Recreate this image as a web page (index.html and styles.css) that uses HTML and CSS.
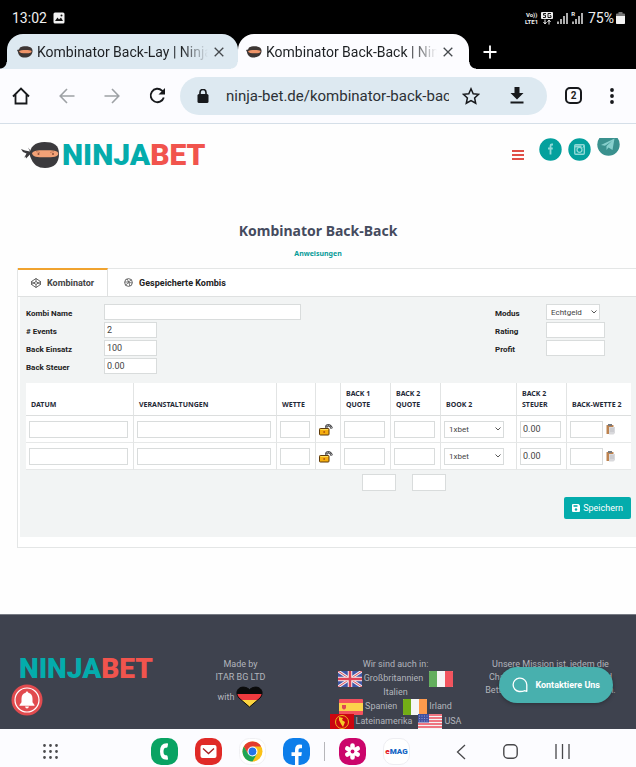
FILE: index.html
```html
<!DOCTYPE html>
<html lang="de">
<head>
<meta charset="utf-8">
<meta name="viewport" content="width=device-width, initial-scale=1">
<title>Kombinator Back-Back | Ninja-Bet</title>
<link rel="stylesheet" href="styles.css">
</head>
<body>
<svg class="defs" aria-hidden="true">
  <symbol id="ninja" viewBox="0 0 39 26">
    <path d="M0 7l4 1.500 5 1-2-4 4 5-2 2-4 4-.5-2L3 16l2.500-4.500L2 10z" fill="#3b3a3d"/>
    <path d="M23.500 0C33 0 38 3 38 12c0 9-5 14-14 14-7 0-12-3-15-12C8 5 14 0 23.500 0z" fill="#3b3a3d"/>
    <path d="M11 11.500c1-3 5-3.300 13-3.300s13.300.3 13.300 3.500c0 3-5 3.600-13.300 3.600S12 14.800 11 11.500z" fill="#f3a277"/>
    <path d="M15 9.500l4 1M33 9.500l-4 1" stroke="#b96d4e" stroke-width=".7"/>
    <circle cx="17.500" cy="12" r="1" fill="#8a4e3a"/><circle cx="32" cy="12" r="1" fill="#8a4e3a"/>
  </symbol>
  <symbol id="favicon" viewBox="0 0 16 12">
    <path d="M3 1.500C6-.4 12-.4 14.500 2c2 2.500 1 6-1.500 8-3 2-8 2-10 0C1.500 8.500 1 7 1 6L0 4l2-.5z" fill="#3d3634"/>
    <path d="M2 5.300c1-1.500 11-1.700 12.500-.3.500 1.500-1.500 2.300-5.500 2.300S2.500 7 2 5.300z" fill="#ef9468"/>
  </symbol>
  <symbol id="close" viewBox="0 0 10 10"><path d="M.7.7l8.600 8.600M9.300.7L.7 9.300" stroke="#45494d" stroke-width="1.300"/></symbol>
  <symbol id="chevron" viewBox="0 0 6 4"><path d="M.5.5L3 3 5.500.5" fill="none" stroke="#444" stroke-width=".9"/></symbol>
  <symbol id="unlock" viewBox="0 0 14 13">
    <path d="M7.500 5.500C6 1.500 11 .8 12.800 5.500" fill="none" stroke="#4a4a4c" stroke-width="2.400"/>
    <path d="M7.500 5.500C6 1.500 11 .8 12.800 5.500" fill="none" stroke="#c4c4c6" stroke-width="1" stroke-dasharray="1.500 1"/>
    <rect x=".5" y="5.500" width="9.500" height="6.500" rx=".8" fill="#f5ae10" stroke="#5d3909"/>
    <path d="M1.500 6.500h7.500" stroke="#ffe05b"/><circle cx="5.200" cy="9" r="1" fill="#b85a0c"/>
  </symbol>
  <symbol id="paste" viewBox="0 0 9 11">
    <rect x=".5" y="1" width="7" height="9" rx=".5" fill="#bd8350"/>
    <rect x="2" y="0" width="4" height="2" fill="#77787b"/>
    <path d="M3 3h6v6l-1.500 1.500H3z" fill="#d9d9dc"/><path d="M4 5h4M4 7h4" stroke="#aeb0b5" stroke-width=".6"/>
  </symbol>
  <symbol id="signal" viewBox="0 0 11 12"><path d="M1 12v-2.500M4 12V7M7 12V4M10 12V1" stroke="#e8e8e8" stroke-width="1.500"/></symbol>
</svg>

<header class="browser">
  <div class="status">
    <span class="clock">13:02</span>
    <svg width="12" height="12" viewBox="0 0 12 12"><rect x=".5" y=".5" width="11" height="11" rx="1.500" fill="#f2f2f2"/><path d="M2 9l2.500-3.500L6 7.500 8 5.500 10 9z" fill="#111"/><circle cx="8.500" cy="3.500" r="1" fill="#111"/></svg>
    <span class="net"><span>Vo))</span><span>LTE1</span></span>
    <svg class="five" width="12" height="13" viewBox="0 0 12 13"><rect width="12" height="7" rx="1" fill="#eee"/><path d="M5 1.500H2.500v1.700h2v2.300H2M10 1.500H7v4h3V3.700H8.700" fill="none" stroke="#000" stroke-width=".9"/><path d="M4 7.500v4M2.500 10L4 12l1.500-2M8 12.500v-4M6.500 10L8 8l1.500 2" fill="none" stroke="#eee"/></svg>
    <svg class="sig" width="11" height="12"><use href="#signal"/></svg>
    <span class="roam">R</span>
    <svg class="sig" width="11" height="12"><use href="#signal"/></svg>
    <span class="charge">75%</span>
    <svg width="9" height="12" viewBox="0 0 9 12"><path d="M2.500 0h4v1.500H8q1 0 1 1V11q0 1-1 1H1q-1 0-1-1V2.500q0-1 1-1h1.500z" fill="#777"/><path d="M0 4h9v7q0 1-1 1H1q-1 0-1-1z" fill="#f3f3f3"/></svg>
  </div>
  <nav class="tabs" aria-label="Tabs">
    <div class="tab tab-idle">
      <svg width="16" height="12"><use href="#favicon"/></svg>
      <a href="#lay">Kombinator Back-Lay | Ninja-Bet</a>
      <button type="button" aria-label="Tab schließen"><svg width="10" height="10"><use href="#close"/></svg></button>
    </div>
    <div class="tab tab-active">
      <svg width="16" height="12"><use href="#favicon"/></svg>
      <a href="#back">Kombinator Back-Back | Ninja-Bet</a>
      <button type="button" aria-label="Tab schließen"><svg width="10" height="10"><use href="#close"/></svg></button>
    </div>
    <button class="new-tab" type="button" aria-label="Neuer Tab"><svg width="14" height="14" viewBox="0 0 14 14"><path d="M7 .5v13M.5 7h13" stroke="#fff" stroke-width="1.800"/></svg></button>
  </nav>
  <div class="toolbar">
    <div class="nav-buttons">
      <button type="button" aria-label="Startseite"><svg width="18" height="18" viewBox="0 0 18 18"><path d="M1 9.500L9 1.500l8 8M3.500 7.500v9h11v-9" fill="none" stroke="#17191c" stroke-width="1.800"/></svg></button>
      <button type="button" aria-label="Zurück"><svg width="16" height="16" viewBox="0 0 16 16"><path d="M15.500 8H1.500M8 1L1.200 8 8 15" fill="none" stroke="#9da1a5" stroke-width="1.600"/></svg></button>
      <button type="button" aria-label="Vorwärts"><svg width="16" height="16" viewBox="0 0 16 16"><path d="M.5 8h14M8 1l6.800 7L8 15" fill="none" stroke="#9da1a5" stroke-width="1.600"/></svg></button>
      <button type="button" aria-label="Neu laden"><svg width="17" height="17" viewBox="0 0 17 17"><path d="M14.800 10.500A6.700 6.700 0 1 1 13 3.600L15 5.500" fill="none" stroke="#17191c" stroke-width="1.900"/><path d="M16 1v6.500H9.500z" fill="#17191c"/></svg></button>
    </div>
    <div class="omnibox">
      <svg width="12" height="14" viewBox="0 0 12 14"><path d="M3 6V3.500a3 3 0 0 1 6 0V6" fill="none" stroke="#17191c" stroke-width="1.600"/><rect x=".5" y="5" width="11" height="9" rx="1.500" fill="#17191c"/></svg>
      <input type="text" aria-label="Adresse" value="ninja-bet.de/kombinator-back-back">
      <button type="button" aria-label="Lesezeichen"><svg width="18" height="18" viewBox="0 0 18 18"><path d="M9 1.800l2.200 4.900 5.400.6-4 3.600 1.100 5.300L9 13.500l-4.700 2.700 1.100-5.300-4-3.600 5.400-.6z" fill="none" stroke="#17191c" stroke-width="1.500"/></svg></button>
      <button class="download" type="button" aria-label="Herunterladen"><svg width="14" height="17" viewBox="0 0 14 17"><path d="M4.500 0h5v6H13.500L7 12.500.5 6h4zM.5 14.500h13v2H.5z" fill="#17191c"/></svg></button>
    </div>
    <button class="count" type="button" aria-label="Offene Tabs">2</button>
    <button class="more" type="button" aria-label="Menü"><svg width="4" height="16" viewBox="0 0 4 16"><path d="M2 2h0M2 8h0M2 14h0" stroke="#17191c" stroke-width="3.800" stroke-linecap="round"/></svg></button>
  </div>
</header>

<main class="page">
  <header class="site-header">
    <a class="logo" href="#home"><svg width="39" height="26"><use href="#ninja"/></svg><span>NINJA<b>BET</b></span></a>
    <button class="burger" type="button" aria-label="Navigation"><svg width="12" height="10" viewBox="0 0 12 10"><path d="M0 1h12M0 5h12M0 9h12" stroke="#e04f47" stroke-width="1.800"/></svg></button>
    <nav class="social" aria-label="Soziale Medien">
      <a href="#facebook" aria-label="Facebook"><svg width="23" height="23" viewBox="0 0 23 23"><circle cx="11.500" cy="11.500" r="11.200" fill="#04a09d"/><path d="M14 6.500h-1.200q-1.300 0-1.300 1.500v8.500M9 10.500h4.800" fill="none" stroke="#8ed8d6" stroke-width="1.800"/></svg></a>
      <a href="#instagram" aria-label="Instagram"><svg width="23" height="23" viewBox="0 0 23 23"><circle cx="11.500" cy="11.500" r="11.200" fill="#04a09d"/><rect x="6.700" y="6.700" width="9.600" height="9.600" rx="1" fill="none" stroke="#8ed8d6" stroke-width="1.400"/><path d="M7 8.500h9" stroke="#8ed8d6" stroke-width="2"/><circle cx="11.500" cy="11.800" r="2.500" fill="#04a09d" stroke="#8ed8d6" stroke-width="1.300"/><path d="M13.500 8.300h1.500" stroke="#04a09d" stroke-width="1.500"/></svg></a>
      <a class="telegram" href="#telegram" aria-label="Telegram"><svg width="23" height="23" viewBox="0 0 23 23"><circle cx="11.500" cy="11.500" r="11.200" fill="#3a918e"/><path d="M4 12L17.500 5.500 15.500 17l-4-2.500-2 2.500v-4L15 8l-7 4.800z" fill="#87cfcc"/></svg></a>
    </nav>
  </header>

  <h1>Kombinator Back-Back</h1>
  <a class="help" href="#anweisungen">Anweisungen</a>

  <section class="box">
    <div class="box-tabs">
      <button class="box-tab is-current" type="button"><svg width="10" height="10" viewBox="0 0 10 10"><path d="M5 .5l4.500 3v3L5 9.500.5 6.500v-3zM.5 3.500L5 6.500l4.500-3M.5 6.500L5 3.500l4.500 3M5 .5v3M5 6.500v3" fill="none" stroke="#444" stroke-width=".8"/></svg>Kombinator</button>
      <button class="box-tab" type="button"><svg width="9" height="9" viewBox="0 0 10 10"><circle cx="5" cy="5" r="4.300" fill="none" stroke="#444" stroke-width=".9"/><path d="M.8 4.500C4 4.800 7 4 8 2M3.200 1C5 3.500 6 6 6.500 9M2 8C3.500 5 6 4.700 9.200 5.500" fill="none" stroke="#444" stroke-width=".8"/></svg>Gespeicherte Kombis</button>
    </div>
    <form class="panel" onsubmit="return false">
      <div class="fields">
        <div class="field-group">
          <label for="name">Kombi Name</label><input id="name" class="wide" type="text">
          <label for="events"># Events</label><input id="events" type="text" value="2">
          <label for="stake">Back Einsatz</label><input id="stake" type="text" value="100">
          <label for="tax">Back Steuer</label><input id="tax" type="text" value="0.00">
        </div>
        <div class="field-group results">
          <label for="mode">Modus</label><span class="select"><select id="mode"><option>Echtgeld</option></select><svg width="6" height="4"><use href="#chevron"/></svg></span>
          <label for="rating">Rating</label><input id="rating" type="text">
          <label for="profit">Profit</label><input id="profit" type="text">
        </div>
      </div>
      <table>
        <colgroup><col class="c-date"><col><col class="c-bet"><col class="c-lock"><col class="c-odds"><col class="c-odds"><col class="c-book"><col class="c-odds"><col class="c-stake"></colgroup>
        <thead>
          <tr><th>Datum</th><th>Veranstaltungen</th><th>Wette</th><th></th><th>Back 1 Quote</th><th>Back 2 Quote</th><th>Book 2</th><th>Back 2 Steuer</th><th>Back-Wette 2</th></tr>
        </thead>
        <tbody>
          <tr>
            <td><input type="text" aria-label="Datum 1"></td><td><input type="text" aria-label="Veranstaltung 1"></td><td><input type="text" aria-label="Wette 1"></td>
            <td class="lock"><svg width="14" height="13"><use href="#unlock"/></svg></td>
            <td><input type="text" aria-label="Back 1 Quote 1"></td><td><input type="text" aria-label="Back 2 Quote 1"></td>
            <td><span class="select book"><select aria-label="Book 2, 1"><option>1xbet</option></select><svg width="6" height="4"><use href="#chevron"/></svg></span></td>
            <td><input type="text" aria-label="Back 2 Steuer 1" value="0.00"></td>
            <td><span class="copy"><input type="text" aria-label="Back-Wette 2, 1"><svg width="9" height="11"><use href="#paste"/></svg></span></td>
          </tr>
          <tr>
            <td><input type="text" aria-label="Datum 2"></td><td><input type="text" aria-label="Veranstaltung 2"></td><td><input type="text" aria-label="Wette 2"></td>
            <td class="lock"><svg width="14" height="13"><use href="#unlock"/></svg></td>
            <td><input type="text" aria-label="Back 1 Quote 2"></td><td><input type="text" aria-label="Back 2 Quote 2"></td>
            <td><span class="select book"><select aria-label="Book 2, 2"><option>1xbet</option></select><svg width="6" height="4"><use href="#chevron"/></svg></span></td>
            <td><input type="text" aria-label="Back 2 Steuer 2" value="0.00"></td>
            <td><span class="copy"><input type="text" aria-label="Back-Wette 2, 2"><svg width="9" height="11"><use href="#paste"/></svg></span></td>
          </tr>
        </tbody>
      </table>
      <div class="totals"><input type="text" aria-label="Gesamtquote 1"><input type="text" aria-label="Gesamtquote 2"></div>
      <button class="save" type="submit"><svg width="8" height="8" viewBox="0 0 8 8"><path d="M1 0h5.500L8 1.500V7q0 1-1 1H1Q0 8 0 7V1q0-1 1-1z" fill="#fff"/><path d="M1.500 1.200h4v1.600h-4z" fill="#04acac"/><circle cx="4" cy="5.500" r="1.200" fill="#04acac"/></svg>Speichern</button>
    </form>
  </section>

  <footer class="site-footer">
    <div class="brand">NINJA<b>BET</b></div>
    <div class="made">
      <div>Made by</div><div>ITAR BG LTD</div>
      <div class="with">with <svg width="27" height="22" viewBox="0 0 27 22"><clipPath id="heart"><path d="M13.500 21L3 12C-3 5 5-3 13.500 3.500 22-3 30 5 24 12z"/></clipPath><g clip-path="url(#heart)"><path d="M0 0h27v8H0z" fill="#0b0b0b"/><path d="M0 8h27v6H0z" fill="#ee3a3e"/><path d="M0 14h27v8H0z" fill="#fcd440"/></g><path d="M13.500 21L3 12C-3 5 5-3 13.500 3.500 22-3 30 5 24 12z" fill="none" stroke="#0b0b0b"/></svg></div>
    </div>
    <div class="countries">
      <div class="line">Wir sind auch in:</div>
      <div class="flags"><svg width="24" height="16" viewBox="0 0 24 16"><rect width="24" height="16" rx="1" fill="#4055a6"/><path d="M0 0l24 16M24 0L0 16" stroke="#eee" stroke-width="3"/><path d="M0 0l24 16M24 0L0 16" stroke="#e2495c" stroke-width="1"/><path d="M12 0v16M0 8h24" stroke="#f2f2f2" stroke-width="4.500"/><path d="M12 0v16M0 8h24" stroke="#dd4256" stroke-width="2.500"/></svg><a href="#gb">Großbritannien</a><svg class="gap" width="24" height="16" viewBox="0 0 24 16"><rect width="24" height="16" rx="1" fill="#f4f4f4"/><path d="M1 0h7v16H1q-1 0-1-1V1q0-1 1-1z" fill="#63ae5d"/><path d="M16 0h7q1 0 1 1v14q0 1-1 1h-7z" fill="#f2545e"/></svg></div>
      <div class="line"><a href="#it">Italien</a></div>
      <div class="flags"><svg width="24" height="16" viewBox="0 0 24 16"><rect width="24" height="16" rx="1" fill="#f3515e"/><path d="M0 4h24v8H0z" fill="#fcd24c"/><path d="M3 6h4v3q-2 3-4 0z" fill="#df4654"/></svg><a href="#es">Spanien</a><svg class="gap" width="24" height="16" viewBox="0 0 24 16"><rect width="24" height="16" rx="1" fill="#f5f5f5"/><path d="M1 0h7v16H1q-1 0-1-1V1q0-1 1-1z" fill="#73ad16"/><path d="M16 0h7q1 0 1 1v14q0 1-1 1h-7z" fill="#ff9a4c"/></svg><a href="#ie">Irland</a></div>
      <div class="flags"><svg width="24" height="16" viewBox="0 0 24 16"><rect width="24" height="16" fill="#cb0610"/><circle cx="12" cy="8" r="6.500" fill="none" stroke="#f0b51d"/><path d="M9 3l4 1-1 2 3 2-2 5-2-3-2-4z" fill="#f6cb27"/></svg><a href="#latam">Lateinamerika</a><svg class="gap" width="24" height="16" viewBox="0 0 24 16"><rect width="24" height="16" fill="#f4f4f4"/><path d="M0 1h24M0 4h24M0 7h24M0 10h24M0 13h24" stroke="#ec4c5b" stroke-width="1.500"/><path d="M0 0h11v8.500H0z" fill="#4050a0"/><path d="M1 2h10M1 4.500h10M1 7h10" stroke="#aab3dd" stroke-dasharray="1 1.500" stroke-width=".8"/></svg><a href="#us">USA</a></div>
    </div>
    <p class="mission">Unsere Mission ist, jedem die<br>Chance zu geben, mit Matched<br>Betting sicher Geld zu verdienen.</p>
  </footer>

  <button class="bell" type="button" aria-label="Benachrichtigungen"><svg width="32" height="32" viewBox="0 0 32 32"><circle cx="16" cy="16" r="15.500" fill="#e14b4f"/><circle cx="16" cy="16" r="12" fill="none" stroke="#fff" stroke-width="1.200"/><path d="M16 7.500q1.300 0 1.300 1.200 4.200 1 4.200 6v3.500l2 2.800v.8h-15V21l2-2.800v-3.500q0-5 4.200-6 0-1.200 1.300-1.200zM14 22.600h4q-.5 2-2 2t-2-2z" fill="#fff"/></svg></button>
  <button class="chat" type="button"><svg width="17" height="16" viewBox="0 0 17 16"><path d="M8 1.200h1a6.700 6.700 0 0 1 6.800 6.600v6.500l-2.300-.6Q12 14.500 9 14.500H8A6.700 6.700 0 0 1 8 1.200z" fill="none" stroke="#fff" stroke-width="1.300" stroke-linejoin="round"/></svg>Kontaktiere Uns</button>
</main>

<nav class="dock" aria-label="Systemleiste">
  <button class="drawer" type="button" aria-label="Alle Apps"><svg width="17" height="17" viewBox="0 0 17 17"><path d="M2.500 2.500h0M8.500 2.500h0M14.500 2.500h0M2.500 8.500h0M8.500 8.500h0M14.500 8.500h0M2.500 14.500h0M8.500 14.500h0M14.500 14.500h0" stroke="#4a4a4d" stroke-width="2.800" stroke-linecap="round"/></svg></button>
  <div class="apps">
    <button type="button" aria-label="Telefon"><svg width="27" height="27" viewBox="0 0 27 27"><rect width="27" height="27" rx="10" fill="#09a363"/><path d="M16.500 5.300q-7.500-.5-7.500 8.200t7.500 8.200q.8-.2.500-1.200l-.5-2.500q-.3-.8-1.300-.7-2.700.3-2.700-3.800t2.700-3.800q1 .1 1.300-.7l.5-2.500q.3-1-.5-1.200z" fill="#fff"/></svg></button>
    <button type="button" aria-label="E-Mail"><svg width="27" height="27" viewBox="0 0 27 27"><rect width="27" height="27" rx="10" fill="#e02a27"/><rect x="5.500" y="7" width="16" height="13" rx="2" fill="#fff"/><path d="M8 10.500l5.500 5 5.500-5" fill="none" stroke="#a51e20" stroke-width="1.300"/></svg></button>
    <button type="button" aria-label="Chrome"><svg width="27" height="27" viewBox="0 0 27 27"><rect x=".5" y=".5" width="26" height="26" rx="10" fill="#fff" stroke="#f0f0f3"/><circle cx="13.500" cy="13.500" r="10" fill="#fbc117"/><path d="M4.840 8.500A10 10 0 0 1 22.160 8.500H13.500L9.200 16z" fill="#e33b2e"/><path d="M4.840 8.500A10 10 0 0 0 13.500 23.500L17.800 16 9.200 16z" fill="#1da453"/><circle cx="13.500" cy="13.500" r="5" fill="#fff"/><circle cx="13.500" cy="13.500" r="3.900" fill="#2474e8"/></svg></button>
    <button type="button" aria-label="Facebook"><svg width="27" height="27" viewBox="0 0 27 27"><rect width="27" height="27" rx="10" fill="#0d7eea"/><path d="M12 27v-9H8.500v-3.700H12v-2.600Q12 6.500 16.800 6.500l2.200.2v3.500h-1.700q-1.800 0-1.800 1.800v2.300h3.400L18.300 18h-2.800v9z" fill="#fff"/></svg></button>
    <span class="divider"></span>
    <button type="button" aria-label="Galerie"><svg width="27" height="27" viewBox="0 0 27 27"><rect width="27" height="27" rx="10" fill="#cb056b"/><path d="M13.500 9V7.500M13.500 18v1.500M9.600 11.200l-1.300-.7M17.400 15.800l1.300.7M9.600 15.800l-1.300.7M17.400 11.200l1.300-.7" stroke="#fff" stroke-width="4.600" stroke-linecap="round"/><circle cx="13.500" cy="13.500" r="4.500" fill="#fff"/><circle cx="13.500" cy="13.500" r="1.900" fill="#cb056b"/></svg></button>
    <button class="emag" type="button"><i>e</i>MAG</button>
  </div>
  <div class="system">
    <button type="button" aria-label="Zurück"><svg width="10" height="16" viewBox="0 0 10 16"><path d="M9 1L1.500 8 9 15" fill="none" stroke="#48484b" stroke-width="1.300"/></svg></button>
    <button type="button" aria-label="Home"><svg width="15" height="15" viewBox="0 0 15 15"><rect x=".8" y=".8" width="13.400" height="13.400" rx="4" fill="none" stroke="#48484b" stroke-width="1.400"/></svg></button>
    <button type="button" aria-label="Letzte Apps"><svg width="15" height="15" viewBox="0 0 15 15"><path d="M1 0v15M7.500 0v15M14 0v15" stroke="#48484b" stroke-width="1.300"/></svg></button>
  </div>
</nav>
</body>
</html>
```
FILE: styles.css
```css
* { box-sizing: border-box; }

body {
  margin: 0;
  height: 100vh;
  display: flex;
  flex-direction: column;
  overflow: hidden;
  background: #fefefe;
  font-family: Roboto, "Liberation Sans", sans-serif;
  color: #222;
}

button {
  margin: 0;
  padding: 0;
  border: 0;
  background: none;
  font: inherit;
  color: inherit;
}

a { color: inherit; text-decoration: none; }
svg { display: block; flex: none; }
.defs { position: absolute; width: 0; height: 0; }

/* Browser chrome */
.browser { flex: none; background: #000; }

.status {
  display: flex;
  align-items: center;
  height: 34px;
  padding: 2px 11px 0 12px;
  color: #f0f0f0;
  font-size: 14px;
}
.clock { margin-right: 6px; }
.net {
  display: flex;
  flex-direction: column;
  margin-left: auto;
  font-size: 6px;
  font-weight: 700;
  line-height: 7px;
  text-align: center;
}
.five { margin: 0 4px 0 3px; }
.roam { align-self: flex-start; margin: 8px -3px 0 3px; font-size: 6px; font-weight: 700; line-height: 8px; }
.charge { margin: 0 2px 0 5px; }

.tabs { display: flex; height: 35px; padding-left: 7px; }
.tab {
  position: relative;
  display: flex;
  align-items: center;
  width: 231px;
  padding: 0 14px 0 10px;
  border-radius: 16px 16px 0 0;
  font-size: 14px;
  color: #1d2023;
}
.tab-idle { background: #dde9f1; }
.tab-active { background: #fcfcff; padding: 0 16px 0 8px; }
.tab-idle::before,
.tab-active::before,
.tab-active::after {
  content: "";
  position: absolute;
  bottom: 0;
  width: 7px;
  height: 7px;
}
.tab-idle::before { left: -7px; background: radial-gradient(circle at 0 0, transparent 6px, #dde9f1 7px); }
.tab-active::before { left: -7px; background: radial-gradient(circle at 0 0, transparent 6px, #fcfcff 7px); }
.tab-active::after { right: -7px; background: radial-gradient(circle at 100% 0, transparent 6px, #fcfcff 7px); }
.tab a {
  flex: 1;
  margin: 0 6px 0 4px;
  overflow: hidden;
  white-space: nowrap;
  -webkit-mask-image: linear-gradient(to right, #000 84%, transparent);
  mask-image: linear-gradient(to right, #000 84%, transparent);
}
.new-tab { margin-left: 14px; }

.toolbar {
  display: flex;
  align-items: center;
  height: 55px;
  padding: 0 22px 1px 12px;
  border-bottom: 1px solid #d5dfe8;
  background: #fcfcff;
}
.nav-buttons { display: flex; align-items: center; gap: 29px; margin-right: 14px; }
.omnibox {
  display: flex;
  align-items: center;
  flex: 1;
  min-width: 0;
  height: 38px;
  padding: 0 23px 0 17px;
  border-radius: 19px;
  background: #dde9f1;
}
.omnibox input {
  flex: 1;
  min-width: 0;
  margin: 0 13px 0 17px;
  padding: 0;
  border: 0;
  background: none;
  font: 15px Roboto, sans-serif;
  color: #2c3136;
  outline: 0;
}
.download { margin-left: 30px; }
.count {
  width: 17px;
  height: 17px;
  margin: 0 28px 0 18px;
  border: 2px solid #17191c;
  border-radius: 5px;
  font-size: 10px;
  font-weight: 700;
  line-height: 13px;
}

/* Page */
.page { position: relative; flex: 1; min-height: 0; overflow: hidden; }

.site-header { display: flex; align-items: flex-start; height: 97px; padding: 14px 16px 0 21px; }
.logo { display: flex; align-items: center; gap: 2px; margin: 4px auto 0 0; }
.logo span, .brand {
  font-family: Roboto, sans-serif;
  font-weight: 900;
  color: #04acac;
}
.logo span { font-size: 30px; line-height: 26px; }
.logo b, .brand b { font-weight: 900; color: #f1544d; }
.burger { margin: 12px 15px 0 0; }
.social { display: flex; gap: 6px; }
.telegram { display: flex; align-items: flex-end; height: 18px; overflow: hidden; }

h1 {
  margin: 0;
  font: 700 14px/20px "Noto Sans", "Open Sans", sans-serif;
  color: #454b5e;
  text-align: center;
}
.help {
  display: block;
  width: max-content;
  margin: 7px auto 8px;
  font: 700 7px/12px "Noto Sans", "Open Sans", sans-serif;
  color: #079b98;
}

.box { margin-left: 17px; border: 1px solid #e4e6e6; border-right: 0; padding-bottom: 10px; background: #fff; }
.box-tabs { display: flex; height: 28px; border-bottom: 1px solid #dfe1e1; }
.box-tab {
  display: flex;
  align-items: center;
  gap: 6px;
  padding: 0 16px;
  font-size: 9px;
  font-weight: 700;
}
.box-tab.is-current {
  padding: 0 13px;
  margin-top: -1px;
  border-top: 2px solid #f0a32f;
  border-right: 1px solid #dfe1e1;
  color: #444;
}

.panel { margin-left: 2px; padding: 7px 5px 18px 6px; background: #f2f4f4; }
.panel input, .panel select {
  width: 100%;
  height: 17px;
  margin: 0;
  padding: 0 2px;
  border: 1px solid #d9dcdc;
  border-radius: 0;
  background: #fff;
  font: 9px Roboto, sans-serif;
  color: #444;
  outline: 0;
}
.fields { display: flex; justify-content: space-between; margin-bottom: 7px; }
.field-group {
  display: grid;
  grid-template-columns: 78px 197px;
  grid-auto-rows: 18px;
  align-content: start;
  font-size: 8px;
  font-weight: 700;
  line-height: 19px;
}
.field-group input { width: 53px; height: 16px; }
.field-group .wide { width: 100%; }
.results { grid-template-columns: 51px 85px; }
.results input { width: 59px; }
.select { position: relative; display: block; width: 54px; height: 16px; }
.panel .select select { display: block; height: 100%; padding: 0 4px; appearance: none; font-size: 8px; }
.select svg { position: absolute; right: 3px; top: 6px; }
.select.book { width: 60px; height: 17px; }

table { width: 100%; border-collapse: separate; border-spacing: 0; table-layout: fixed; background: #fff; }
.c-date { width: 108px; }
.c-bet { width: 39px; }
.c-lock { width: 25px; }
.c-odds { width: 50px; }
.c-book { width: 76px; }
.c-stake { width: 64px; }
th {
  height: 33px;
  padding: 0 4px 5px 5px;
  border-right: 1px solid #e2e4e4;
  border-bottom: 1px solid #dcdede;
  vertical-align: bottom;
  text-align: left;
  text-transform: uppercase;
  font: 700 7px/11px "Noto Sans", "Open Sans", sans-serif;
  color: #1f2937;
}
th:last-child { padding-right: 0; white-space: nowrap; }
td { height: 27px; padding: 0 5px 0 3px; border-right: 1px solid #e2e4e4; border-bottom: 1px solid #e6e8e8; }
th:last-child, td:last-child { border-right: 0; }
td input { display: block; }
td.lock { padding: 0 0 0 3px; }
.copy { display: flex; align-items: center; gap: 3px; }
.panel .copy input { width: 33px; }

.totals { display: flex; justify-content: flex-end; gap: 16px; margin: 4px 185px 6px 0; }
.panel .totals input { width: 34px; }
.save {
  display: flex;
  align-items: center;
  gap: 3px;
  height: 22px;
  margin-left: auto;
  padding: 0 8px;
  border-radius: 2px;
  background: #04acac;
  color: #fff;
  font-size: 9px;
}

.site-footer {
  display: grid;
  grid-template-columns: repeat(4, 1fr);
  height: 190px;
  margin-top: 66px;
  padding: 43px 8px 0;
  border-top: 1px solid #777b84;
  background: #3e424e;
  color: #b2b5bc;
  font-size: 9px;
  line-height: 13px;
  text-align: center;
}
.brand { padding-left: 11px; font-size: 28px; line-height: 22px; text-align: left; }
.with { display: flex; align-items: center; justify-content: center; gap: 2px; height: 26px; }
.flags { display: flex; align-items: center; justify-content: center; gap: 2px; height: 15px; margin: 0 -10px; }
.flags .gap { margin-left: 4px; }
.mission { margin: 0; white-space: nowrap; }

.bell { position: absolute; left: 11px; bottom: 13px; }
.chat {
  position: absolute;
  right: 23px;
  bottom: 26px;
  display: flex;
  align-items: center;
  gap: 7px;
  height: 36px;
  padding: 0 13px 0 12px;
  border-radius: 18px;
  background: #48b0ae;
  box-shadow: 0 1px 4px rgba(0, 0, 0, 0.3);
  color: #fff;
  font-size: 9px;
  font-weight: 700;
}

/* System navigation */
.dock {
  display: flex;
  align-items: center;
  flex: none;
  height: 38px;
  padding: 7px 66px 0 42px;
  background: #fcfcff;
}
.apps { display: flex; align-items: center; gap: 17px; margin: 0 auto 0 92px; }
.divider { width: 1px; height: 19px; margin: 0 -3px; background: #b6b6ba; }
.emag {
  width: 27px;
  height: 27px;
  border: 1px solid #eeeef2;
  border-radius: 10px;
  background: #fff;
  color: #1465c4;
  font-size: 8px;
  font-weight: 900;
}
.emag i { color: #e51f2b; font-style: normal; }
.system { display: flex; align-items: center; gap: 37px; }
```
